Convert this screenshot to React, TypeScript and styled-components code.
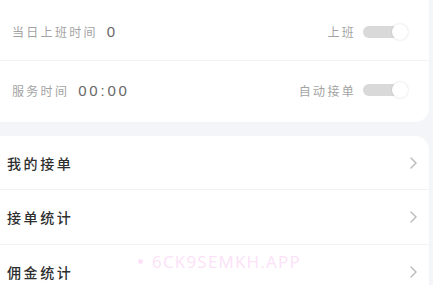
import React from 'react'
import styled, { createGlobalStyle } from 'styled-components'

const GlobalStyle = createGlobalStyle`
  html, body {
    margin: 0;
    padding: 0;
    background: #f3f5f8;
    font-family: 'Noto Sans CJK SC', 'Noto Sans', sans-serif;
  }
`

const Page = styled.div`
  position: relative;
  width: 433px;
  height: 285px;
  overflow: hidden;
  display: flex;
  flex-direction: column;
  gap: 14px;
  padding-right: 4px;
  box-sizing: border-box;
`

const Card = styled.div<{ $top?: boolean }>`
  background: #fff;
  margin-left: -16px;
  padding-left: 16px;
  border-radius: ${(p) => (p.$top ? '0 0 14px 14px' : '14px 14px 0 0')};
  padding-top: ${(p) => (p.$top ? '3px' : '0')};
  padding-bottom: ${(p) => (p.$top ? '3px' : '0')};
  flex: ${(p) => (p.$top ? '0 0 auto' : '1')};
`

const StatusRow = styled.div<{ $divider?: boolean }>`
  height: 58px;
  display: flex;
  align-items: center;
  padding: 0 21px 0 12px;
  border-bottom: ${(p) => (p.$divider ? '1px solid #f3f3f3' : 'none')};
  box-sizing: border-box;
`

const Label = styled.span`
  font-size: 12px;
  letter-spacing: 2.3px;
  color: #a3a3a3;
`

const Value = styled.span`
  margin-left: 9px;
  font-family: 'Liberation Sans', 'Noto Sans', sans-serif;
  font-size: 15px;
  letter-spacing: 2.8px;
  color: #686868;
`

const Right = styled.div`
  margin-left: auto;
  display: flex;
  align-items: center;
  gap: 7px;
`

const Switch = styled.div`
  position: relative;
  width: 45px;
  height: 16px;
  display: flex;
  align-items: center;
`

const Track = styled.div`
  width: 38px;
  height: 12px;
  border-radius: 6px;
  background: #d9d9d9;
`

const Knob = styled.div`
  position: absolute;
  right: 0;
  top: 0;
  width: 16px;
  height: 16px;
  border-radius: 50%;
  background: #fff;
  box-shadow: 0 0 2px rgba(0, 0, 0, 0.18);
`

const MenuRow = styled.div<{ $h: number; $divider?: boolean }>`
  height: ${(p) => p.$h}px;
  display: flex;
  align-items: center;
  padding: 0 11px 0 7px;
  box-sizing: border-box;
  border-bottom: ${(p) => (p.$divider ? '1px solid #f2f2f2' : 'none')};
`

const MenuText = styled.span`
  font-size: 14px;
  font-weight: 500;
  letter-spacing: 2.6px;
  color: #2e2e2e;
`

const Chevron = styled.svg`
  margin-left: auto;
`

const Watermark = styled.div`
  position: absolute;
  left: 138px;
  top: 250px;
  display: flex;
  align-items: center;
  gap: 9px;
  font-family: 'Open Sans', 'Noto Sans', sans-serif;
  font-size: 17px;
  letter-spacing: 1.2px;
  color: #fbe2f8;
  pointer-events: none;
`

const Dot = styled.span`
  width: 5px;
  height: 5px;
  border-radius: 50%;
  background: #fbe2f8;
`

const Toggle = () => (
  <Switch>
    <Track />
    <Knob />
  </Switch>
)

const Arrow = () => (
  <Chevron width='10' height='14' viewBox='0 0 10 14'>
    <polyline points='3,2 8,7 3,12' fill='none' stroke='#bdbdbd' strokeWidth='1.5' strokeLinecap='round' strokeLinejoin='round' />
  </Chevron>
)

const menu = [
  { label: '我的接单', h: 54 },
  { label: '接单统计', h: 55 },
  { label: '佣金统计', h: 54 }
]

export default function App() {
  return (
    <>
      <GlobalStyle />
      <Page>
        <Card $top>
          <StatusRow $divider>
            <Label>当日上班时间</Label>
            <Value>0</Value>
            <Right>
              <Label>上班</Label>
              <Toggle />
            </Right>
          </StatusRow>
          <StatusRow>
            <Label>服务时间</Label>
            <Value>00:00</Value>
            <Right>
              <Label>自动接单</Label>
              <Toggle />
            </Right>
          </StatusRow>
        </Card>
        <Card>
          {menu.map((m, i) => (
            <MenuRow key={m.label} $h={m.h} $divider={i < menu.length - 1}>
              <MenuText>{m.label}</MenuText>
              <Arrow />
            </MenuRow>
          ))}
        </Card>
        <Watermark>
          <Dot />
          6CK9SEMKH.APP
        </Watermark>
      </Page>
    </>
  )
}
